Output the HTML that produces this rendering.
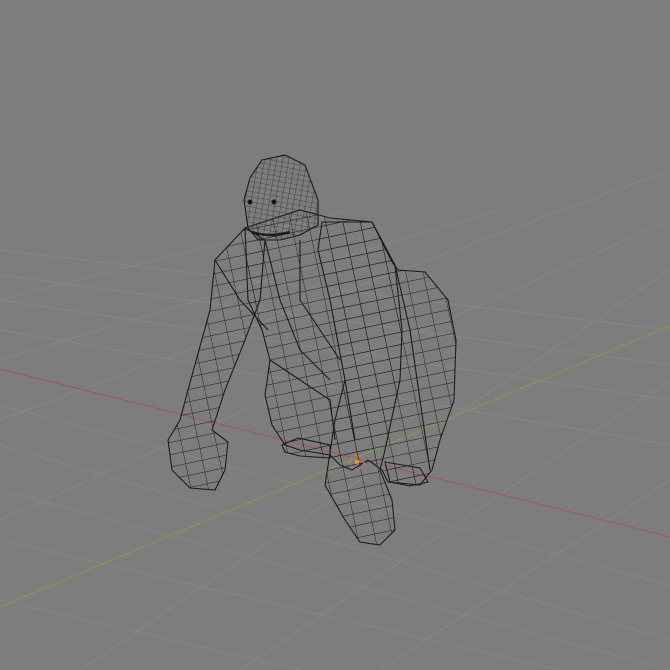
<!DOCTYPE html>
<html><head><style>
html,body{margin:0;padding:0;background:#7d7d7d;overflow:hidden;width:670px;height:670px;}
svg{display:block;position:absolute;left:0;top:0}
</style></head><body>
<svg width="670" height="670" viewBox="0 0 670 670" xmlns="http://www.w3.org/2000/svg">
<defs>
<pattern id="mesh" width="17" height="12" patternUnits="userSpaceOnUse" patternTransform="rotate(-12)">
<path d="M0 0H17M0 0V12" stroke="#1c1c1c" stroke-width="0.9" fill="none"/>
</pattern>
<pattern id="meshf" width="6" height="5" patternUnits="userSpaceOnUse" patternTransform="rotate(10)">
<path d="M0 0H6M0 0V5" stroke="#1c1c1c" stroke-width="0.6" fill="none"/>
</pattern>
<clipPath id="c"><rect width="670" height="670"/></clipPath>
</defs>
<g clip-path="url(#c)">
<rect width="670" height="670" fill="#7d7d7d"/>
<g stroke="#878787" stroke-width="1" fill="none">
<path d="M0 250L670 330M0 275L670 365M0 300L670 400M0 330L670 445M0 405L670 585M0 445L670 640M0 490L670 670M0 540L560 670M0 600L300 670"/>
<path d="M0 420L670 170M0 520L670 220M80 670L670 270M240 670L670 380M380 670L670 480M0 360L500 210M0 300L350 210"/>
</g>
<path d="M0 369L670 537" stroke="#a05a5a" stroke-width="1.2"/>
<path d="M0 607L670 326" stroke="#7a9a5a" stroke-width="1.2"/>
<g stroke="#1c1c1c" stroke-width="1.1">
<path fill="url(#mesh)" d="M245 228L300 210L330 218L372 222L392 262L398 270L425 272L448 300L456 340L454 400L440 440L432 470L420 485L388 482L382 470L368 460L352 470L340 465L330 455L300 450L285 445L272 425L265 395L270 360L262 330L248 300Z"/>
<path fill="url(#mesh)" d="M245 228L265 240L260 300L245 340L225 390L212 430L228 442L225 470L215 490L190 488L172 470L168 440L180 420L188 390L210 310L215 260Z"/>
<path fill="url(#mesh)" d="M322 222L372 222L395 265L402 330L400 380L385 450L380 470L392 500L395 530L380 545L360 542L345 520L325 485L335 420L345 380L330 300L318 250Z"/>
<path fill="url(#mesh)" d="M282 445L298 438L330 445L330 458L300 456L285 452Z"/>
<path fill="url(#mesh)" d="M385 462L420 468L428 482L410 486L390 482Z"/>
<path fill="url(#meshf)" d="M250 178L262 160L285 155L305 165L318 200L318 225L300 235L280 240L258 240L248 228L244 200Z"/>
<path d="M252 232Q270 238 290 232" stroke-width="2.5" fill="none"/>
<circle cx="250" cy="202" r="2" fill="#111"/><circle cx="274" cy="202" r="2" fill="#111"/>
<path d="M265 240L280 300L300 350L330 380M300 240L300 300L340 360M215 260L240 300L268 330M395 265L410 330L420 400L430 470M345 380L355 440M270 360L300 380L330 400L335 440" fill="none"/>
</g>
<circle cx="357" cy="462" r="7" fill="none" stroke="#c87070" stroke-width="1.5" stroke-dasharray="3 2"/>
<circle cx="357" cy="462" r="2.5" fill="#e09030"/>
</g>
</svg>
</body></html>
